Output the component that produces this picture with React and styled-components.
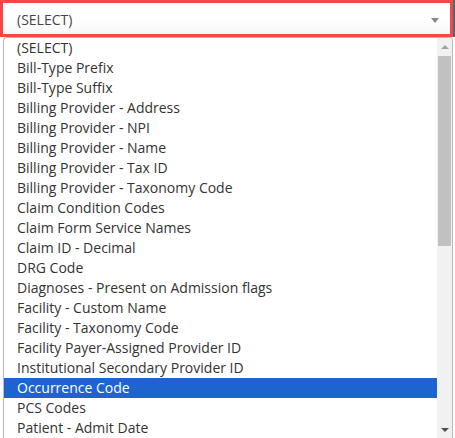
import React from 'react'
import styled, { createGlobalStyle } from 'styled-components'

const GlobalStyle = createGlobalStyle`
  html, body {
    margin: 0;
    padding: 0;
    background: #ffffff;
    overflow: hidden;
  }
  body {
    font-family: "Open Sans", "Liberation Sans", sans-serif;
  }
`

const Page = styled.div`
  width: 455px;
  height: 438px;
  overflow: hidden;
  display: flex;
  flex-direction: column;
`

const SelectRow = styled.div`
  display: flex;
  background: #3d6e74;
`

const SelectBox = styled.div`
  box-sizing: border-box;
  width: 453px;
  height: 37px;
  border: 3px solid #f94545;
  background: linear-gradient(#ffffff 55%, #f6f6f6);
  display: flex;
  align-items: center;
  justify-content: space-between;
  padding: 1px 11px 0 14px;
  font-size: 14px;
  color: #444444;
`

const Caret = styled.span`
  width: 0;
  height: 0;
  border-left: 4.5px solid transparent;
  border-right: 4.5px solid transparent;
  border-top: 5px solid #888888;
  margin-top: 2px;
`

const Dropdown = styled.div`
  box-sizing: border-box;
  margin-left: 3px;
  width: 450px;
  flex: 1;
  border: 1px solid #b8b8b8;
  border-bottom: none;
  border-radius: 4px 4px 0 0;
  background: #ffffff;
  display: flex;
  overflow: hidden;
`

const List = styled.ul`
  list-style: none;
  margin: 0;
  padding: 0;
  flex: 1;
`

const Item = styled.li`
  height: 20px;
  line-height: 20px;
  padding-left: 13px;
  font-size: 14px;
  white-space: nowrap;
  color: ${(p) => (p.$active ? '#ffffff' : '#333333')};
  background: ${(p) => (p.$active ? '#1e64d0' : 'transparent')};
`

const Scrollbar = styled.div`
  width: 15px;
  background: #f1f1f1;
  display: flex;
  flex-direction: column;
  align-items: center;
`

const ArrowButton = styled.div`
  height: 17px;
  width: 100%;
  display: flex;
  align-items: center;
  justify-content: center;
`

const Arrow = styled.span`
  width: 0;
  height: 0;
  border-left: 4px solid transparent;
  border-right: 4px solid transparent;
  ${(p) =>
    p.$up
      ? 'border-bottom: 4px solid #a3a3a3;'
      : 'border-top: 4px solid #505050;'}
`

const Track = styled.div`
  flex: 1;
  width: 100%;
  padding-top: 1px;
  display: flex;
  flex-direction: column;
`

const Thumb = styled.div`
  margin: 0 1px;
  height: 190px;
  background: #c1c1c1;
`

const items = [
  '(SELECT)',
  'Bill-Type Prefix',
  'Bill-Type Suffix',
  'Billing Provider - Address',
  'Billing Provider - NPI',
  'Billing Provider - Name',
  'Billing Provider - Tax ID',
  'Billing Provider - Taxonomy Code',
  'Claim Condition Codes',
  'Claim Form Service Names',
  'Claim ID - Decimal',
  'DRG Code',
  'Diagnoses - Present on Admission flags',
  'Facility - Custom Name',
  'Facility - Taxonomy Code',
  'Facility Payer-Assigned Provider ID',
  'Institutional Secondary Provider ID',
  'Occurrence Code',
  'PCS Codes',
  'Patient - Admit Date',
]

const App = () => {
  const active = 'Occurrence Code'
  return (
    <Page>
      <GlobalStyle />
      <SelectRow>
        <SelectBox>
          <span>(SELECT)</span>
          <Caret />
        </SelectBox>
      </SelectRow>
      <Dropdown>
        <List>
          {items.map((name) => (
            <Item key={name} $active={name === active}>
              {name}
            </Item>
          ))}
        </List>
        <Scrollbar>
          <ArrowButton>
            <Arrow $up />
          </ArrowButton>
          <Track>
            <Thumb />
          </Track>
          <ArrowButton>
            <Arrow />
          </ArrowButton>
        </Scrollbar>
      </Dropdown>
    </Page>
  )
}

export default App
